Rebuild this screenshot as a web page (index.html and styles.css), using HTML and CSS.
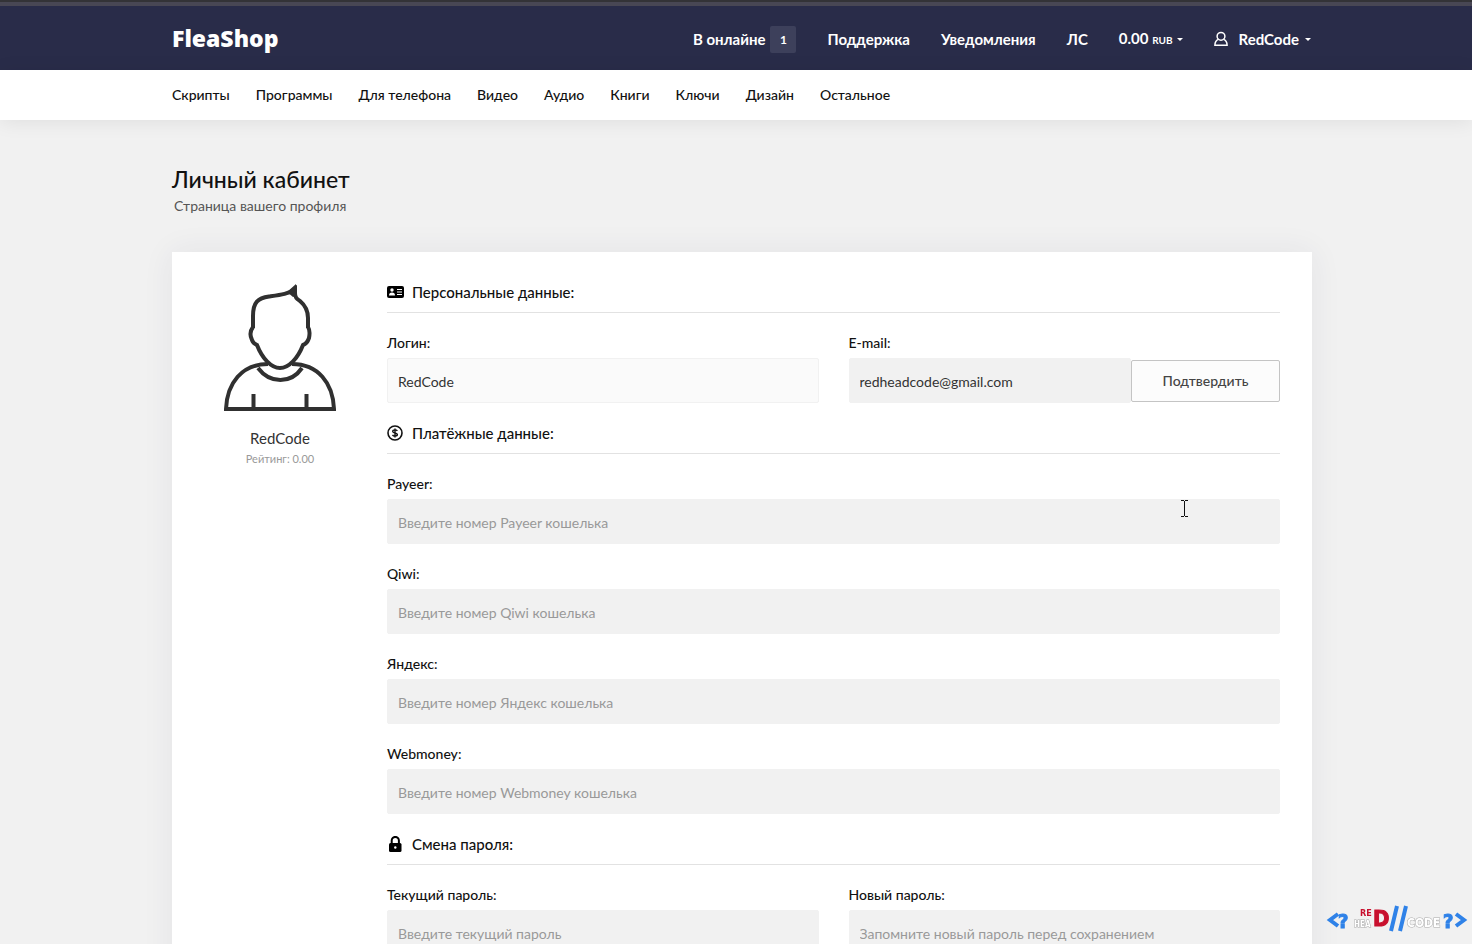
FILE: index.html
```html
<!DOCTYPE html>
<html lang="ru">
<head>
<meta charset="utf-8">
<title>FleaShop</title>
<link rel="stylesheet" href="styles.css">
</head>
<body>
<header class="topbar">
  <div class="container topbar-inner">
    <a class="logo" href="#">FleaShop</a>
    <nav class="account-nav">
      <a class="account-link" href="#">В онлайне <span class="badge">1</span></a>
      <a class="account-link" href="#">Поддержка</a>
      <a class="account-link" href="#">Уведомления</a>
      <a class="account-link" href="#">ЛС</a>
      <button class="account-link menu-button" type="button"><span>0.00 <small class="currency">RUB</small></span><span class="caret"></span></button>
      <button class="account-link menu-button" type="button"><svg class="user-icon" viewBox="0 0 14 16" aria-hidden="true"><circle cx="7" cy="5.3" r="3.9"/><path d="M4.3 8.4C2 9.5.9 11.500.9 14.200h12.200c0-2.700-1.100-4.700-3.400-5.800"/></svg>RedCode<span class="caret user-caret"></span></button>
    </nav>
  </div>
</header>
<nav class="categories">
  <div class="container categories-inner">
    <a href="#">Скрипты</a>
    <a href="#">Программы</a>
    <a href="#">Для телефона</a>
    <a href="#">Видео</a>
    <a href="#">Аудио</a>
    <a href="#">Книги</a>
    <a href="#">Ключи</a>
    <a href="#">Дизайн</a>
    <a href="#">Остальное</a>
  </div>
</nav>
<main class="container">
  <div class="page-title">
    <h1>Личный кабинет</h1>
    <p>Страница вашего профиля</p>
  </div>
  <div class="card">
    <aside class="profile">
      <svg class="avatar" viewBox="0 0 112 130" role="img" aria-label="RedCode">
        <path d="M29 46V34C29 20 34 16 45 14.500C56 13 65 12 71 7V11C71 16 73 17 76 19C82 24 84 29 84 36V46"/>
        <path d="M29 45C26 49 26 54 28 58C29 61 31 62 33 63C38 76 47 86 56 86C65 86 74 76 79 63C82 62 84 59 85 56C86 51 86 48 84 45"/>
        <path d="M44 82C18 82 3 101 2 127H110C109 101 94 82 68 82M34 86C46 102 67 102 78 86M29.500 128V112M82.500 128V112"/>
        <path class="avatar-tuft" d="M63 10L72 2V14L69 15Z"/>
      </svg>
      <div class="profile-name">RedCode</div>
      <div class="rating">Рейтинг: 0.00</div>
    </aside>
    <form class="form">
      <h2 class="section"><svg class="section-icon" viewBox="0 0 18 16" aria-hidden="true"><rect x="0" y="2" width="17" height="12" rx="2"/><g fill="#fff"><circle cx="5" cy="6" r="1.700"/><path d="M2 11.500c0-2 1-3 3-3s3 1 3 3zM10 5h5v1h-5zM10 7.500h5v1h-5zM10 10h5v1h-5z"/></g></svg>Персональные данные:</h2>
      <div class="row">
        <div class="field">
          <label for="login">Логин:</label>
          <input id="login" class="input input-readonly" type="text" value="RedCode" readonly>
        </div>
        <div class="field">
          <label for="email">E-mail:</label>
          <div class="input-group">
            <input id="email" class="input" type="email" value="redheadcode@gmail.com">
            <button class="confirm" type="button">Подтвердить</button>
          </div>
        </div>
      </div>
      <h2 class="section"><svg class="section-icon" viewBox="0 0 18 16" aria-hidden="true"><circle cx="8" cy="8" r="7" fill="none" stroke="#111" stroke-width="1.600"/><path d="M10.300 6C9.800 5 8.900 4.900 8 4.900c-1.300 0-2.300.5-2.300 1.500C5.700 8.500 10.400 7.400 10.400 9.600c0 1-1 1.500-2.400 1.500-1.100 0-2-.3-2.500-1.200M8 3.500v9" fill="none" stroke="#111" stroke-width="1.400"/></svg>Платёжные данные:</h2>
      <div class="field">
        <label for="payeer">Payeer:</label>
        <input id="payeer" class="input" type="text" placeholder="Введите номер Payeer кошелька">
      </div>
      <div class="field">
        <label for="qiwi">Qiwi:</label>
        <input id="qiwi" class="input" type="text" placeholder="Введите номер Qiwi кошелька">
      </div>
      <div class="field">
        <label for="yandex">Яндекс:</label>
        <input id="yandex" class="input" type="text" placeholder="Введите номер Яндекс кошелька">
      </div>
      <div class="field">
        <label for="webmoney">Webmoney:</label>
        <input id="webmoney" class="input" type="text" placeholder="Введите номер Webmoney кошелька">
      </div>
      <h2 class="section"><svg class="section-icon" viewBox="0 0 18 16" aria-hidden="true"><path d="M4.700 8V4.500a3.600 3.600 0 0 1 7.200 0V8" fill="none" stroke="#000" stroke-width="2"/><rect x="2" y="7" width="12.500" height="9" rx="1.500"/><circle cx="8.300" cy="11.500" r="1.200" fill="#fff"/></svg>Смена пароля:</h2>
      <div class="row">
        <div class="field">
          <label for="current">Текущий пароль:</label>
          <input id="current" class="input" type="password" placeholder="Введите текущий пароль">
        </div>
        <div class="field">
          <label for="new">Новый пароль:</label>
          <input id="new" class="input" type="password" placeholder="Запомните новый пароль перед сохранением">
        </div>
      </div>
    </form>
  </div>
</main>
<svg class="text-cursor" viewBox="0 0 9 17" aria-hidden="true"><path d="M1 .5h3M5 .5h3M4.500 1v15M1 16.500h3M5 16.500h3"/></svg>
<svg class="watermark" viewBox="0 0 142 34" role="img" aria-label="RED HEAD CODE">
  <path class="mark-blue" d="M12 12L4 18L12 24M130 12L138 18L130 24"/>
  <g class="mark-question"><text x="12" y="26">?</text><text x="117" y="26">?</text></g>
  <text class="mark-re" x="34" y="14">RE</text>
  <text class="mark-hea" x="28" y="25">HEA</text>
  <text class="mark-d" x="47" y="24">D</text>
  <path class="mark-blue" d="M65 29L71 4M74 29L80 4"/>
  <text class="mark-code" x="81" y="25">CODE</text>
</svg>
</body>
</html>
```
FILE: styles.css
```css
* { box-sizing: border-box; }
body {
  margin: 0;
  height: 100vh;
  overflow: hidden;
  background: #f1f1f1;
  color: #111;
  font-family: Lato, "Noto Sans", sans-serif;
  font-size: 14px;
}
a { color: inherit; text-decoration: none; }
input, button { font: inherit; }
.container {
  max-width: 1164px;
  margin: 0 auto;
  padding: 0 6px 0 18px;
}
.topbar {
  background: #292c49;
  border-top: 6px solid #484754;
  color: #fff;
}
.topbar::before {
  content: "";
  position: absolute;
  top: 0;
  left: 0;
  right: 0;
  height: 2px;
  background: #333337;
}
.topbar-inner {
  display: flex;
  align-items: center;
  justify-content: space-between;
  height: 64px;
  padding-top: 2px;
}
.logo {
  padding-bottom: 2px;
  font-family: "Noto Sans", sans-serif;
  font-size: 23px;
  font-weight: 900;
  line-height: 32px;
}
.account-nav { display: flex; align-items: center; gap: 31px; }
.account-link {
  display: flex;
  align-items: center;
  font-size: 15px;
  font-weight: 700;
  line-height: 28px;
  white-space: nowrap;
}
.menu-button { padding: 0; border: 0; background: none; color: #fff; }
.badge {
  width: 26px;
  margin-left: 5px;
  border-radius: 2px;
  background: #3d405b;
  font-size: 12px;
  line-height: 27px;
  text-align: center;
}
.currency { font-size: 10px; }
.caret {
  margin-left: 4px;
  border: 3px solid transparent;
  border-top-color: #fff;
  border-bottom: 0;
}
.user-caret { margin: 0 1px 0 6px; }
.user-icon {
  width: 14px;
  height: 16px;
  margin-right: 11px;
  fill: none;
  stroke: #fff;
  stroke-width: 1.5;
}
.categories {
  background: #fff;
  box-shadow: 0 2px 20px rgba(0, 0, 0, 0.08);
}
.categories-inner {
  display: flex;
  align-items: center;
  gap: 26px;
  height: 50px;
  padding-bottom: 2px;
  font-weight: 500;
}
.page-title { padding: 43px 0 35px; }
.page-title h1 {
  margin: 0;
  font-size: 23px;
  font-weight: 500;
  line-height: 32px;
}
.page-title p {
  margin: 0;
  padding-left: 2px;
  color: #555;
  line-height: 22px;
}
.card {
  display: grid;
  grid-template-columns: 152px 1fr;
  gap: 31px;
  padding: 28px 32px;
  background: #fff;
  box-shadow: 0 0 30px rgba(41, 44, 90, 0.07);
}
.profile {
  display: flex;
  flex-direction: column;
  align-items: center;
  padding-top: 2px;
}
.avatar {
  width: 112px;
  height: 130px;
  fill: none;
  stroke: #303030;
  stroke-width: 4;
}
.avatar-tuft { fill: #303030; stroke: none; }
.profile-name { margin-top: 14px; color: #333; font-size: 15px; line-height: 24px; }
.rating { color: #999; font-size: 11px; line-height: 18px; }
.section {
  display: flex;
  align-items: center;
  margin: 0 0 18px;
  padding-bottom: 8px;
  border-bottom: 1px solid #e2e2e2;
  font-size: 15px;
  font-weight: 500;
  line-height: 24px;
}
.section-icon { width: 18px; height: 16px; margin-right: 7px; }
.row { display: grid; grid-template-columns: 1fr 1fr; gap: 30px; }
.field { margin-bottom: 18px; }
.field label {
  display: block;
  margin-bottom: 3px;
  font-weight: 500;
  line-height: 24px;
}
.input {
  display: block;
  width: 100%;
  height: 45px;
  padding: 1px 10px 0;
  border: 1px solid #f1f1f1;
  border-radius: 2px;
  background: #f1f1f1;
  color: #333;
}
.input::placeholder { color: #999; opacity: 1; }
.input-readonly { background: #fafafa; }
.input-group { display: flex; align-items: center; }
.input-group .input { flex: 1; min-width: 0; }
.confirm {
  width: 149px;
  height: 42px;
  border: 1px solid #c4c4c4;
  border-radius: 2px;
  background: #fcfcfc;
  color: #444;
  font-weight: 500;
}
.text-cursor {
  position: absolute;
  top: 500px;
  left: 1180px;
  width: 9px;
  height: 17px;
  fill: none;
  stroke: #111;
}
.watermark {
  position: fixed;
  right: 4px;
  bottom: 8px;
  width: 142px;
  height: 34px;
  font-family: "DejaVu Sans Condensed", sans-serif;
  font-weight: 700;
}
.mark-blue { fill: none; stroke: #2f82e8; stroke-width: 4; }
.mark-question { fill: #2f82e8; stroke: #2f82e8; font-size: 20px; }
.mark-re { fill: #c8102e; font-size: 9px; }
.mark-d { fill: #c8102e; stroke: #c8102e; font-size: 22px; }
.mark-hea, .mark-code { fill: #fff; stroke: #aaa; stroke-width: 1; paint-order: stroke; }
.mark-hea { font-size: 8px; }
.mark-code { font-size: 12px; }
```
